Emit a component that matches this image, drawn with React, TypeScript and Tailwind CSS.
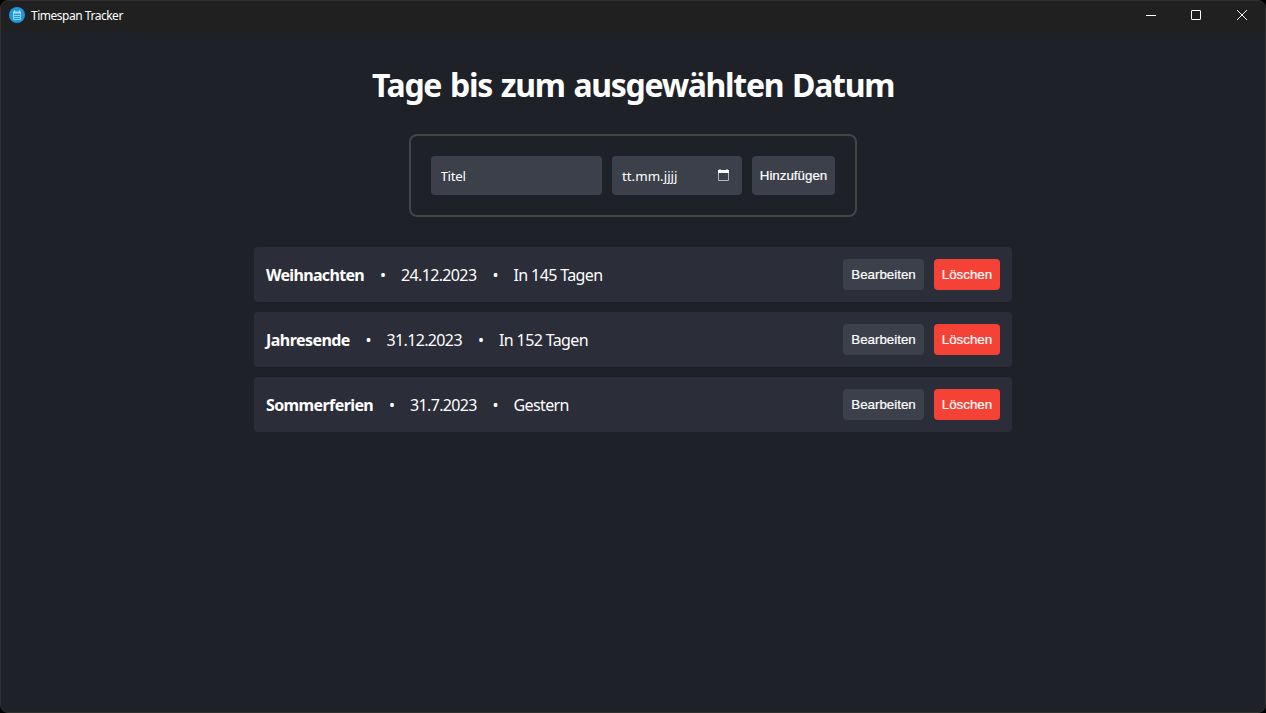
import React from "react";

type Entry = { title: string; date: string; remaining: string; titleClass: string; dateClass: string; remainingClass: string };

const entries: Entry[] = [
  { title: "Weihnachten", date: "24.12.2023", remaining: "In 145 Tagen", titleClass: "w-[98px] tracking-[-0.67px]", dateClass: "w-[75.5px]", remainingClass: "w-[90px]" },
  { title: "Jahresende", date: "31.12.2023", remaining: "In 152 Tagen", titleClass: "w-[83.5px] tracking-[-0.55px]", dateClass: "w-[75.5px]", remainingClass: "w-[90px]" },
  { title: "Sommerferien", date: "31.7.2023", remaining: "Gestern", titleClass: "w-[107px] tracking-[-0.6px]", dateClass: "w-[66.5px]", remainingClass: "w-[55px]" },
];

function TitleBar() {
  return (
    <header className="flex h-[30px] shrink-0 items-center bg-[#202020] pl-2">
      <svg width="16" height="16" viewBox="0 0 16 16" className="-mt-0.5 shrink-0">
        <circle cx="8" cy="8" r="8" fill="#1a98e0" />
        <path d="M4.5 5v7.5h7V5M5 8.5h6M5 10.5h6M5.5 3v2M10.5 3v2" fill="none" stroke="#9fd6f7" strokeWidth="0.9" />
        <path d="M4 4.5h8v2H4z" fill="#b9e2fa" />
      </svg>
      <span className="ml-1.5 text-[12px] leading-4 tracking-[-0.48px] text-white">Timespan Tracker</span>
      <div className="ml-auto flex h-7 self-start text-white">
        <button aria-label="Minimieren" className="flex w-[45px] items-center justify-center">
          <svg width="10" height="10" viewBox="0 0 10 10" stroke="currentColor"><path d="M0 5.5h10" /></svg>
        </button>
        <button aria-label="Maximieren" className="flex w-[46px] items-center justify-center">
          <svg width="10" height="10" viewBox="0 0 10 10" fill="none" stroke="currentColor"><rect x=".5" y=".5" width="9" height="9" rx=".5" /></svg>
        </button>
        <button aria-label="Schließen" className="flex w-[46px] items-center justify-center">
          <svg width="10" height="10" viewBox="0 0 10 10" fill="none" stroke="currentColor"><path d="M0 0l10 10M10 0L0 10" /></svg>
        </button>
      </div>
    </header>
  );
}

function Bullet() {
  return <span className="mx-4 w-[5px] text-center">•</span>;
}

function Row({ entry }: { entry: Entry }) {
  return (
    <li className="flex h-[55px] items-center rounded bg-[#2b2d38] px-3 text-[16px] whitespace-nowrap text-white">
      <div className="flex pt-px">
        <strong className={entry.titleClass}>{entry.title}</strong>
        <Bullet />
        <span className={`tracking-[-0.64px] ${entry.dateClass}`}>{entry.date}</span>
        <Bullet />
        <span className={`tracking-[-0.62px] ${entry.remainingClass}`}>{entry.remaining}</span>
      </div>
      <div className="ml-auto flex gap-2.5 font-['Liberation_Sans',sans-serif] text-[13.333px] [-webkit-text-stroke:0.2px_white]">
        <button className="h-[31px] w-[81px] rounded bg-[#3c404a]">Bearbeiten</button>
        <button className="h-[31px] w-[66px] rounded bg-[#f44336]">Löschen</button>
      </div>
    </li>
  );
}

export default function App() {
  return (
    <div className="h-[713px] w-[1266px] bg-black">
      <div className="flex h-full flex-col overflow-hidden rounded-lg border border-[#303030] bg-[#1f2129] font-['Noto_Sans',sans-serif] text-white">
        <TitleBar />
        <main className="flex flex-col items-center">
          <h1 className="mt-8 text-[32px] leading-[43px] font-bold tracking-[-1.3px] [word-spacing:1.8px] whitespace-nowrap">Tage bis zum ausgewählten Datum</h1>
          <form className="mt-7 flex h-[83px] w-[448px] gap-2.5 rounded-lg border-2 border-[#444444] p-5 text-[13.333px]" onSubmit={(e) => e.preventDefault()}>
            <input placeholder="Titel" className="h-[39px] w-[171px] rounded bg-[#3c404a] px-[9.5px] pt-px tracking-[-0.3px] outline-none placeholder:text-white" />
            <div className="flex h-[39px] w-[130px] items-center justify-between rounded bg-[#3c404a] px-2.5">
              <span className="pt-0.5">tt.mm.jjjj</span>
              <svg width="11" height="12" viewBox="0 0 11 12" className="mr-[3px] -mt-px"><path d="M.5 3v8.500h10V3" fill="none" stroke="#b5b6ba" /><path d="M0 1h11v3H0zM1.500 0h1v2h-1zM8.500 0h1v2h-1z" fill="white" /></svg>
            </div>
            <button className="h-[39px] w-[83px] rounded bg-[#3c404a] font-['Liberation_Sans',sans-serif] [-webkit-text-stroke:0.2px_white]">Hinzufügen</button>
          </form>
          <ul className="mt-[30px] flex w-[758px] flex-col gap-2.5">
            {entries.map((entry) => <Row key={entry.title} entry={entry} />)}
          </ul>
        </main>
      </div>
    </div>
  );
}
